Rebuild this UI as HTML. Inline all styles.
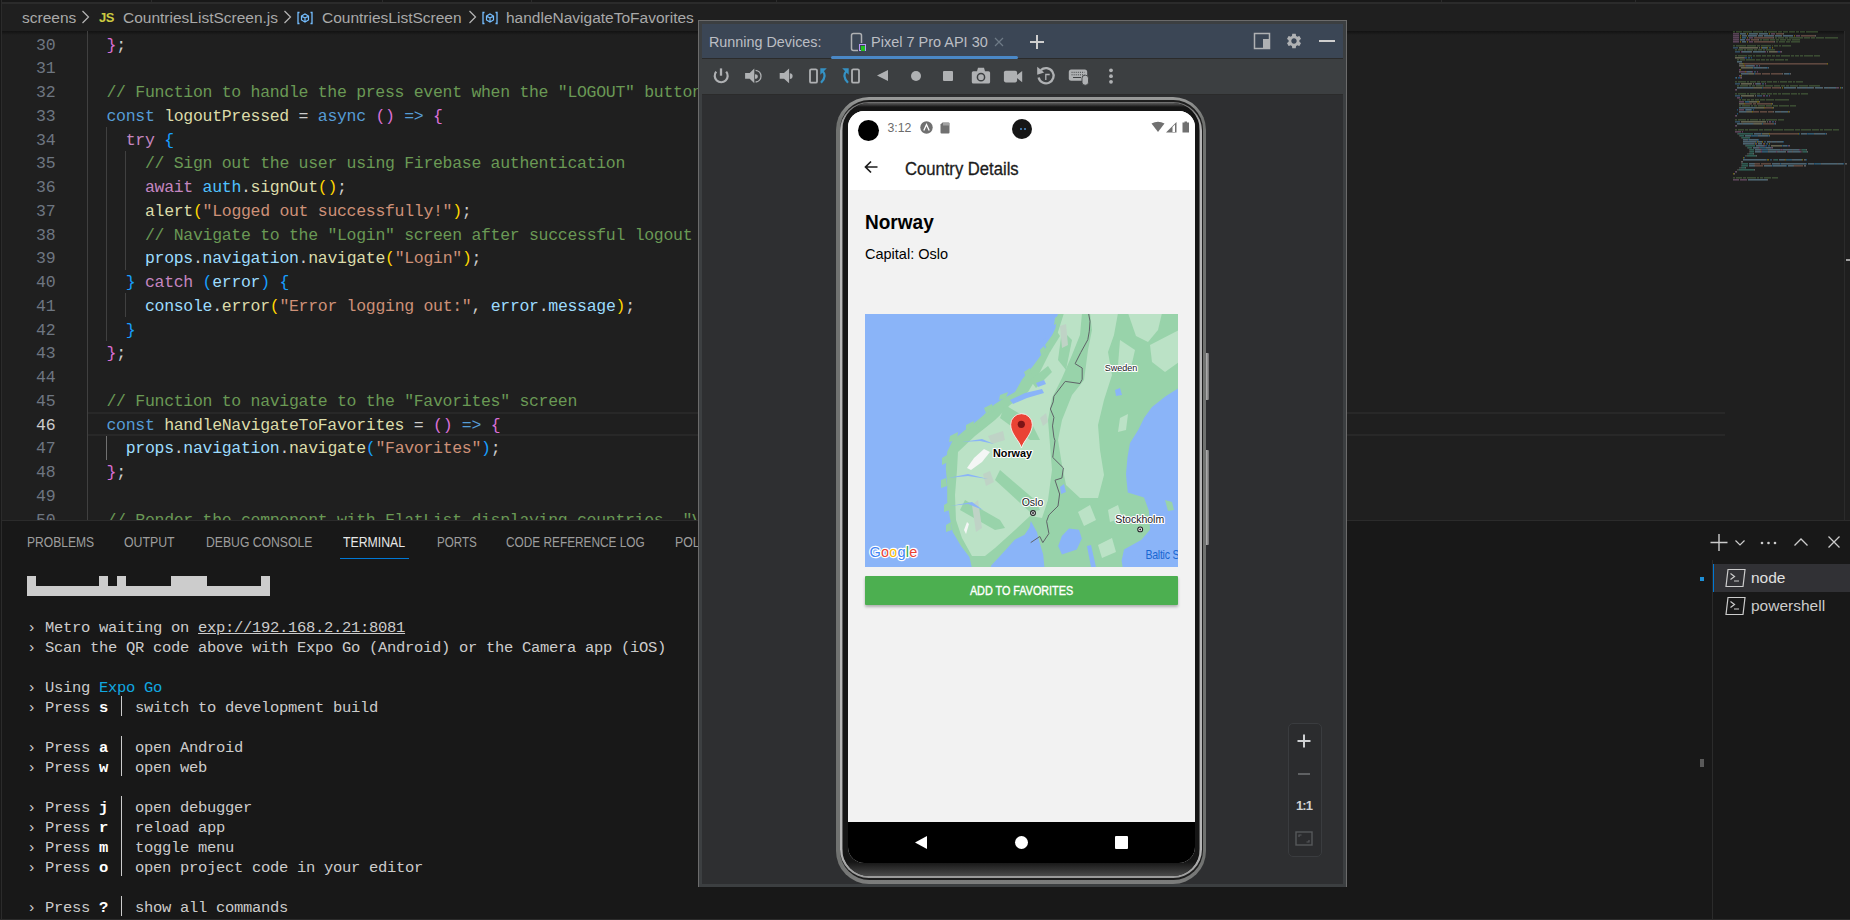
<!DOCTYPE html>
<html><head><meta charset="utf-8">
<style>
*{margin:0;padding:0;box-sizing:border-box}
html,body{width:1850px;height:920px;overflow:hidden;background:#1f1f1f;font-family:"Liberation Sans",sans-serif}
.a{position:absolute}
.cl{position:absolute;left:87.3px;height:23.75px;line-height:23.75px;font-family:"Liberation Mono",monospace;font-size:16.5px;letter-spacing:-0.3px;white-space:pre;padding-top:1.5px}
.ln{position:absolute;left:0;width:55.3px;text-align:right;height:23.75px;line-height:23.75px;font-family:"Liberation Mono",monospace;font-size:16.5px;letter-spacing:-0.3px;white-space:pre;padding-top:1.5px}
.ig{position:absolute;width:1px;background:#404040}
.tl{position:absolute;left:27px;height:20px;line-height:20px;padding-top:1.5px;font-family:"Liberation Mono",monospace;font-size:15.5px;letter-spacing:-0.3px;white-space:pre;color:#cccccc}

.ic{position:absolute}

</style></head><body>
<div class="a" style="left:0;top:0;width:1850px;height:3px;background:#181818"></div>
<div class="a" style="left:0;top:2px;width:1850px;height:2px;background:#2b2b2b"></div>
<div class="a" style="left:151px;top:0;width:1px;height:3px;background:#2b2b2b"></div>
<div class="a" style="left:382px;top:0;width:1px;height:3px;background:#2b2b2b"></div>
<div class="a" style="left:531px;top:0;width:1px;height:3px;background:#2b2b2b"></div>
<div class="a" style="left:776px;top:0;width:1px;height:3px;background:#2b2b2b"></div>
<div class="a" style="left:1441px;top:0;width:1px;height:3px;background:#2b2b2b"></div>
<div class="a" style="left:1635px;top:0;width:1px;height:3px;background:#2b2b2b"></div>
<div class="a" style="left:0;top:0;width:1px;height:920px;background:#181818"></div>
<div class="a" style="left:1px;top:0;width:1px;height:920px;background:#2b2b2b"></div>
<div class="a" style="left:22px;top:8px;height:20px;line-height:20px;font-size:15.5px;color:#a9a9a9;white-space:pre">screens</div>
<svg class="a" style="left:81px;top:10px" width="10" height="14"><path d="M1.5 1 L7.5 7 L1.5 13" stroke="#b4b4b4" stroke-width="1.25" fill="none"/></svg>
<div class="a" style="left:99px;top:9px;height:18px;line-height:18px;font-size:13px;font-weight:bold;color:#cbcb41;letter-spacing:-0.5px">JS</div>
<div class="a" style="left:123px;top:8px;height:20px;line-height:20px;font-size:15.5px;color:#a9a9a9;white-space:pre">CountriesListScreen.js</div>
<svg class="a" style="left:283px;top:10px" width="10" height="14"><path d="M1.5 1 L7.5 7 L1.5 13" stroke="#b4b4b4" stroke-width="1.25" fill="none"/></svg>
<svg class="a" style="left:297px;top:11px" width="16" height="14"><path d="M2.5 1.5 H1 V12.5 H2.5 M13.5 1.5 H15 V12.5 H13.5" stroke="#75beff" stroke-width="1.3" fill="none"/><path d="M4.5 5 L8 3 L11.5 5 V9 L8 11 L4.5 9 Z M4.5 5 L8 7 L11.5 5 M8 7 V11" stroke="#75beff" stroke-width="1.2" fill="none"/></svg>
<div class="a" style="left:322px;top:8px;height:20px;line-height:20px;font-size:15.5px;color:#a9a9a9;white-space:pre">CountriesListScreen</div>
<svg class="a" style="left:468px;top:10px" width="10" height="14"><path d="M1.5 1 L7.5 7 L1.5 13" stroke="#b4b4b4" stroke-width="1.25" fill="none"/></svg>
<svg class="a" style="left:482px;top:11px" width="16" height="14"><path d="M2.5 1.5 H1 V12.5 H2.5 M13.5 1.5 H15 V12.5 H13.5" stroke="#75beff" stroke-width="1.3" fill="none"/><path d="M4.5 5 L8 3 L11.5 5 V9 L8 11 L4.5 9 Z M4.5 5 L8 7 L11.5 5 M8 7 V11" stroke="#75beff" stroke-width="1.2" fill="none"/></svg>
<div class="a" style="left:506px;top:8px;height:20px;line-height:20px;font-size:15.5px;color:#a9a9a9;white-space:pre">handleNavigateToFavorites</div>
<div class="a" style="left:2px;top:31px;width:1843px;height:4px;background:linear-gradient(#121212,rgba(31,31,31,0))"></div>
<div class="a" style="left:88px;top:412px;width:1637px;height:2px;background:#282828"></div>
<div class="a" style="left:88px;top:434px;width:1637px;height:2px;background:#282828"></div>
<div class="ig" style="left:87px;top:31px;height:490px"></div>
<div class="ig" style="left:106px;top:127.0px;height:213.8px;background:#404040"></div>
<div class="ig" style="left:125px;top:150.8px;height:118.8px;background:#404040"></div>
<div class="ig" style="left:125px;top:293.2px;height:23.8px;background:#404040"></div>
<div class="ig" style="left:106px;top:435.8px;height:23.8px;background:#707070"></div>
<div class="cl" style="top:32.00px"><span style="color:#cccccc"> </span><span style="color:#cccccc"> </span><span style="color:#da70d6">}</span><span style="color:#cccccc">;</span></div>
<div class="ln" style="top:32.00px;color:#6e7681">30</div>
<div class="cl" style="top:55.75px"></div>
<div class="ln" style="top:55.75px;color:#6e7681">31</div>
<div class="cl" style="top:79.50px"><span style="color:#cccccc"> </span><span style="color:#cccccc"> </span><span style="color:#6a9955">// Function to handle the press event when the "LOGOUT" button is pressed</span></div>
<div class="ln" style="top:79.50px;color:#6e7681">32</div>
<div class="cl" style="top:103.25px"><span style="color:#cccccc"> </span><span style="color:#cccccc"> </span><span style="color:#569cd6">const</span><span style="color:#cccccc"> </span><span style="color:#dcdcaa">logoutPressed</span><span style="color:#cccccc"> </span><span style="color:#cccccc">=</span><span style="color:#cccccc"> </span><span style="color:#569cd6">async</span><span style="color:#cccccc"> </span><span style="color:#da70d6">(</span><span style="color:#da70d6">)</span><span style="color:#cccccc"> </span><span style="color:#569cd6">=&gt;</span><span style="color:#cccccc"> </span><span style="color:#da70d6">{</span></div>
<div class="ln" style="top:103.25px;color:#6e7681">33</div>
<div class="cl" style="top:127.00px"><span style="color:#cccccc"> </span><span style="color:#cccccc"> </span><span style="color:#cccccc"> </span><span style="color:#cccccc"> </span><span style="color:#c586c0">try</span><span style="color:#cccccc"> </span><span style="color:#179fff">{</span></div>
<div class="ln" style="top:127.00px;color:#6e7681">34</div>
<div class="cl" style="top:150.75px"><span style="color:#cccccc"> </span><span style="color:#cccccc"> </span><span style="color:#cccccc"> </span><span style="color:#cccccc"> </span><span style="color:#cccccc"> </span><span style="color:#cccccc"> </span><span style="color:#6a9955">// Sign out the user using Firebase authentication</span></div>
<div class="ln" style="top:150.75px;color:#6e7681">35</div>
<div class="cl" style="top:174.50px"><span style="color:#cccccc"> </span><span style="color:#cccccc"> </span><span style="color:#cccccc"> </span><span style="color:#cccccc"> </span><span style="color:#cccccc"> </span><span style="color:#cccccc"> </span><span style="color:#c586c0">await</span><span style="color:#cccccc"> </span><span style="color:#4fc1ff">auth</span><span style="color:#cccccc">.</span><span style="color:#dcdcaa">signOut</span><span style="color:#ffd700">(</span><span style="color:#ffd700">)</span><span style="color:#cccccc">;</span></div>
<div class="ln" style="top:174.50px;color:#6e7681">36</div>
<div class="cl" style="top:198.25px"><span style="color:#cccccc"> </span><span style="color:#cccccc"> </span><span style="color:#cccccc"> </span><span style="color:#cccccc"> </span><span style="color:#cccccc"> </span><span style="color:#cccccc"> </span><span style="color:#dcdcaa">alert</span><span style="color:#ffd700">(</span><span style="color:#ce9178">"Logged out successfully!"</span><span style="color:#ffd700">)</span><span style="color:#cccccc">;</span></div>
<div class="ln" style="top:198.25px;color:#6e7681">37</div>
<div class="cl" style="top:222.00px"><span style="color:#cccccc"> </span><span style="color:#cccccc"> </span><span style="color:#cccccc"> </span><span style="color:#cccccc"> </span><span style="color:#cccccc"> </span><span style="color:#cccccc"> </span><span style="color:#6a9955">// Navigate to the "Login" screen after successful logout</span></div>
<div class="ln" style="top:222.00px;color:#6e7681">38</div>
<div class="cl" style="top:245.75px"><span style="color:#cccccc"> </span><span style="color:#cccccc"> </span><span style="color:#cccccc"> </span><span style="color:#cccccc"> </span><span style="color:#cccccc"> </span><span style="color:#cccccc"> </span><span style="color:#9cdcfe">props</span><span style="color:#cccccc">.</span><span style="color:#9cdcfe">navigation</span><span style="color:#cccccc">.</span><span style="color:#dcdcaa">navigate</span><span style="color:#ffd700">(</span><span style="color:#ce9178">"Login"</span><span style="color:#ffd700">)</span><span style="color:#cccccc">;</span></div>
<div class="ln" style="top:245.75px;color:#6e7681">39</div>
<div class="cl" style="top:269.50px"><span style="color:#cccccc"> </span><span style="color:#cccccc"> </span><span style="color:#cccccc"> </span><span style="color:#cccccc"> </span><span style="color:#179fff">}</span><span style="color:#cccccc"> </span><span style="color:#c586c0">catch</span><span style="color:#cccccc"> </span><span style="color:#179fff">(</span><span style="color:#9cdcfe">error</span><span style="color:#179fff">)</span><span style="color:#cccccc"> </span><span style="color:#179fff">{</span></div>
<div class="ln" style="top:269.50px;color:#6e7681">40</div>
<div class="cl" style="top:293.25px"><span style="color:#cccccc"> </span><span style="color:#cccccc"> </span><span style="color:#cccccc"> </span><span style="color:#cccccc"> </span><span style="color:#cccccc"> </span><span style="color:#cccccc"> </span><span style="color:#9cdcfe">console</span><span style="color:#cccccc">.</span><span style="color:#dcdcaa">error</span><span style="color:#ffd700">(</span><span style="color:#ce9178">"Error logging out:"</span><span style="color:#cccccc">,</span><span style="color:#cccccc"> </span><span style="color:#9cdcfe">error</span><span style="color:#cccccc">.</span><span style="color:#9cdcfe">message</span><span style="color:#ffd700">)</span><span style="color:#cccccc">;</span></div>
<div class="ln" style="top:293.25px;color:#6e7681">41</div>
<div class="cl" style="top:317.00px"><span style="color:#cccccc"> </span><span style="color:#cccccc"> </span><span style="color:#cccccc"> </span><span style="color:#cccccc"> </span><span style="color:#179fff">}</span></div>
<div class="ln" style="top:317.00px;color:#6e7681">42</div>
<div class="cl" style="top:340.75px"><span style="color:#cccccc"> </span><span style="color:#cccccc"> </span><span style="color:#da70d6">}</span><span style="color:#cccccc">;</span></div>
<div class="ln" style="top:340.75px;color:#6e7681">43</div>
<div class="cl" style="top:364.50px"></div>
<div class="ln" style="top:364.50px;color:#6e7681">44</div>
<div class="cl" style="top:388.25px"><span style="color:#cccccc"> </span><span style="color:#cccccc"> </span><span style="color:#6a9955">// Function to navigate to the "Favorites" screen</span></div>
<div class="ln" style="top:388.25px;color:#6e7681">45</div>
<div class="cl" style="top:412.00px"><span style="color:#cccccc"> </span><span style="color:#cccccc"> </span><span style="color:#569cd6">const</span><span style="color:#cccccc"> </span><span style="color:#dcdcaa">handleNavigateToFavorites</span><span style="color:#cccccc"> </span><span style="color:#cccccc">=</span><span style="color:#cccccc"> </span><span style="color:#da70d6">(</span><span style="color:#da70d6">)</span><span style="color:#cccccc"> </span><span style="color:#569cd6">=&gt;</span><span style="color:#cccccc"> </span><span style="color:#da70d6">{</span></div>
<div class="ln" style="top:412.00px;color:#cccccc">46</div>
<div class="cl" style="top:435.75px"><span style="color:#cccccc"> </span><span style="color:#cccccc"> </span><span style="color:#cccccc"> </span><span style="color:#cccccc"> </span><span style="color:#9cdcfe">props</span><span style="color:#cccccc">.</span><span style="color:#9cdcfe">navigation</span><span style="color:#cccccc">.</span><span style="color:#dcdcaa">navigate</span><span style="color:#179fff">(</span><span style="color:#ce9178">"Favorites"</span><span style="color:#179fff">)</span><span style="color:#cccccc">;</span></div>
<div class="ln" style="top:435.75px;color:#6e7681">47</div>
<div class="cl" style="top:459.50px"><span style="color:#cccccc"> </span><span style="color:#cccccc"> </span><span style="color:#da70d6">}</span><span style="color:#cccccc">;</span></div>
<div class="ln" style="top:459.50px;color:#6e7681">48</div>
<div class="cl" style="top:483.25px"></div>
<div class="ln" style="top:483.25px;color:#6e7681">49</div>
<div class="cl" style="top:507.00px"><span style="color:#cccccc"> </span><span style="color:#cccccc"> </span><span style="color:#6a9955">// Render the component with FlatList displaying countries, "View Favorites" button, and "LOGOUT" button</span></div>
<div class="ln" style="top:507.00px;color:#6e7681">50</div>
<svg style="position:absolute;left:0;top:0" width="1850" height="920" opacity="0.36"><rect x="1733" y="31" width="2" height="1.6" fill="#6a9955"/><rect x="1736" y="31" width="6" height="1.6" fill="#6a9955"/><rect x="1743" y="31" width="9" height="1.6" fill="#6a9955"/><rect x="1753" y="31" width="10" height="1.6" fill="#6a9955"/><rect x="1764" y="31" width="3" height="1.6" fill="#6a9955"/><rect x="1768" y="31" width="9" height="1.6" fill="#6a9955"/><rect x="1778" y="31" width="4" height="1.6" fill="#6a9955"/><rect x="1783" y="31" width="5" height="1.6" fill="#6a9955"/><rect x="1789" y="31" width="6" height="1.6" fill="#6a9955"/><rect x="1796" y="31" width="3" height="1.6" fill="#6a9955"/><rect x="1800" y="31" width="5" height="1.6" fill="#6a9955"/><rect x="1806" y="31" width="12" height="1.6" fill="#6a9955"/><rect x="1733" y="33" width="6" height="1.6" fill="#c586c0"/><rect x="1740" y="33" width="5" height="1.6" fill="#9cdcfe"/><rect x="1745" y="33" width="1" height="1.6" fill="#cccccc"/><rect x="1747" y="33" width="1" height="1.6" fill="#ffd700"/><rect x="1749" y="33" width="8" height="1.6" fill="#9cdcfe"/><rect x="1757" y="33" width="1" height="1.6" fill="#cccccc"/><rect x="1759" y="33" width="9" height="1.6" fill="#9cdcfe"/><rect x="1769" y="33" width="1" height="1.6" fill="#ffd700"/><rect x="1771" y="33" width="4" height="1.6" fill="#c586c0"/><rect x="1776" y="33" width="7" height="1.6" fill="#ce9178"/><rect x="1783" y="33" width="1" height="1.6" fill="#cccccc"/><rect x="1733" y="35" width="6" height="1.6" fill="#c586c0"/><rect x="1740" y="35" width="1" height="1.6" fill="#ffd700"/><rect x="1742" y="35" width="4" height="1.6" fill="#9cdcfe"/><rect x="1746" y="35" width="1" height="1.6" fill="#cccccc"/><rect x="1748" y="35" width="8" height="1.6" fill="#9cdcfe"/><rect x="1756" y="35" width="1" height="1.6" fill="#cccccc"/><rect x="1758" y="35" width="4" height="1.6" fill="#9cdcfe"/><rect x="1762" y="35" width="1" height="1.6" fill="#cccccc"/><rect x="1764" y="35" width="9" height="1.6" fill="#9cdcfe"/><rect x="1773" y="35" width="1" height="1.6" fill="#cccccc"/><rect x="1775" y="35" width="6" height="1.6" fill="#9cdcfe"/><rect x="1781" y="35" width="1" height="1.6" fill="#cccccc"/><rect x="1783" y="35" width="10" height="1.6" fill="#9cdcfe"/><rect x="1794" y="35" width="1" height="1.6" fill="#ffd700"/><rect x="1796" y="35" width="4" height="1.6" fill="#c586c0"/><rect x="1801" y="35" width="14" height="1.6" fill="#ce9178"/><rect x="1815" y="35" width="1" height="1.6" fill="#cccccc"/><rect x="1733" y="37" width="6" height="1.6" fill="#c586c0"/><rect x="1740" y="37" width="1" height="1.6" fill="#ffd700"/><rect x="1742" y="37" width="4" height="1.6" fill="#4fc1ff"/><rect x="1747" y="37" width="1" height="1.6" fill="#ffd700"/><rect x="1749" y="37" width="4" height="1.6" fill="#c586c0"/><rect x="1754" y="37" width="19" height="1.6" fill="#ce9178"/><rect x="1773" y="37" width="1" height="1.6" fill="#cccccc"/><rect x="1775" y="37" width="2" height="1.6" fill="#6a9955"/><rect x="1778" y="37" width="6" height="1.6" fill="#6a9955"/><rect x="1785" y="37" width="3" height="1.6" fill="#6a9955"/><rect x="1789" y="37" width="14" height="1.6" fill="#6a9955"/><rect x="1804" y="37" width="6" height="1.6" fill="#6a9955"/><rect x="1811" y="37" width="4" height="1.6" fill="#6a9955"/><rect x="1816" y="37" width="8" height="1.6" fill="#6a9955"/><rect x="1825" y="37" width="13" height="1.6" fill="#6a9955"/><rect x="1733" y="39" width="6" height="1.6" fill="#c586c0"/><rect x="1740" y="39" width="5" height="1.6" fill="#9cdcfe"/><rect x="1746" y="39" width="4" height="1.6" fill="#c586c0"/><rect x="1751" y="39" width="7" height="1.6" fill="#ce9178"/><rect x="1758" y="39" width="1" height="1.6" fill="#cccccc"/><rect x="1760" y="39" width="2" height="1.6" fill="#6a9955"/><rect x="1763" y="39" width="6" height="1.6" fill="#6a9955"/><rect x="1770" y="39" width="5" height="1.6" fill="#6a9955"/><rect x="1776" y="39" width="3" height="1.6" fill="#6a9955"/><rect x="1780" y="39" width="6" height="1.6" fill="#6a9955"/><rect x="1787" y="39" width="4" height="1.6" fill="#6a9955"/><rect x="1792" y="39" width="8" height="1.6" fill="#6a9955"/><rect x="1733" y="41" width="6" height="1.6" fill="#c586c0"/><rect x="1740" y="41" width="1" height="1.6" fill="#ffd700"/><rect x="1742" y="41" width="4" height="1.6" fill="#9cdcfe"/><rect x="1747" y="41" width="1" height="1.6" fill="#ffd700"/><rect x="1749" y="41" width="4" height="1.6" fill="#c586c0"/><rect x="1754" y="41" width="20" height="1.6" fill="#ce9178"/><rect x="1774" y="41" width="1" height="1.6" fill="#cccccc"/><rect x="1776" y="41" width="2" height="1.6" fill="#6a9955"/><rect x="1779" y="41" width="6" height="1.6" fill="#6a9955"/><rect x="1786" y="41" width="4" height="1.6" fill="#6a9955"/><rect x="1791" y="41" width="9" height="1.6" fill="#6a9955"/><rect x="1733" y="45" width="2" height="1.6" fill="#6a9955"/><rect x="1736" y="45" width="10" height="1.6" fill="#6a9955"/><rect x="1747" y="45" width="9" height="1.6" fill="#6a9955"/><rect x="1757" y="45" width="3" height="1.6" fill="#6a9955"/><rect x="1761" y="45" width="10" height="1.6" fill="#6a9955"/><rect x="1772" y="45" width="1" height="1.6" fill="#6a9955"/><rect x="1774" y="45" width="4" height="1.6" fill="#6a9955"/><rect x="1779" y="45" width="2" height="1.6" fill="#6a9955"/><rect x="1782" y="45" width="9" height="1.6" fill="#6a9955"/><rect x="1733" y="47" width="5" height="1.6" fill="#569cd6"/><rect x="1739" y="47" width="19" height="1.6" fill="#dcdcaa"/><rect x="1759" y="47" width="1" height="1.6" fill="#cccccc"/><rect x="1761" y="47" width="1" height="1.6" fill="#ffd700"/><rect x="1762" y="47" width="5" height="1.6" fill="#9cdcfe"/><rect x="1767" y="47" width="1" height="1.6" fill="#ffd700"/><rect x="1769" y="47" width="2" height="1.6" fill="#569cd6"/><rect x="1772" y="47" width="1" height="1.6" fill="#ffd700"/><rect x="1735" y="49" width="2" height="1.6" fill="#6a9955"/><rect x="1738" y="49" width="5" height="1.6" fill="#6a9955"/><rect x="1744" y="49" width="2" height="1.6" fill="#6a9955"/><rect x="1747" y="49" width="6" height="1.6" fill="#6a9955"/><rect x="1754" y="49" width="3" height="1.6" fill="#6a9955"/><rect x="1758" y="49" width="4" height="1.6" fill="#6a9955"/><rect x="1763" y="49" width="2" height="1.6" fill="#6a9955"/><rect x="1766" y="49" width="9" height="1.6" fill="#6a9955"/><rect x="1735" y="51" width="5" height="1.6" fill="#569cd6"/><rect x="1741" y="51" width="1" height="1.6" fill="#da70d6"/><rect x="1742" y="51" width="9" height="1.6" fill="#9cdcfe"/><rect x="1751" y="51" width="1" height="1.6" fill="#cccccc"/><rect x="1753" y="51" width="12" height="1.6" fill="#9cdcfe"/><rect x="1765" y="51" width="1" height="1.6" fill="#da70d6"/><rect x="1767" y="51" width="1" height="1.6" fill="#cccccc"/><rect x="1769" y="51" width="8" height="1.6" fill="#dcdcaa"/><rect x="1777" y="51" width="1" height="1.6" fill="#da70d6"/><rect x="1778" y="51" width="1" height="1.6" fill="#179fff"/><rect x="1779" y="51" width="1" height="1.6" fill="#179fff"/><rect x="1780" y="51" width="1" height="1.6" fill="#da70d6"/><rect x="1781" y="51" width="1" height="1.6" fill="#cccccc"/><rect x="1735" y="55" width="2" height="1.6" fill="#6a9955"/><rect x="1738" y="55" width="9" height="1.6" fill="#6a9955"/><rect x="1748" y="55" width="4" height="1.6" fill="#6a9955"/><rect x="1753" y="55" width="2" height="1.6" fill="#6a9955"/><rect x="1756" y="55" width="5" height="1.6" fill="#6a9955"/><rect x="1762" y="55" width="4" height="1.6" fill="#6a9955"/><rect x="1767" y="55" width="4" height="1.6" fill="#6a9955"/><rect x="1772" y="55" width="3" height="1.6" fill="#6a9955"/><rect x="1776" y="55" width="4" height="1.6" fill="#6a9955"/><rect x="1781" y="55" width="9" height="1.6" fill="#6a9955"/><rect x="1791" y="55" width="3" height="1.6" fill="#6a9955"/><rect x="1795" y="55" width="4" height="1.6" fill="#6a9955"/><rect x="1800" y="55" width="3" height="1.6" fill="#6a9955"/><rect x="1804" y="55" width="9" height="1.6" fill="#6a9955"/><rect x="1814" y="55" width="6" height="1.6" fill="#6a9955"/><rect x="1735" y="57" width="9" height="1.6" fill="#dcdcaa"/><rect x="1744" y="57" width="1" height="1.6" fill="#da70d6"/><rect x="1745" y="57" width="1" height="1.6" fill="#179fff"/><rect x="1746" y="57" width="1" height="1.6" fill="#179fff"/><rect x="1748" y="57" width="2" height="1.6" fill="#569cd6"/><rect x="1751" y="57" width="1" height="1.6" fill="#179fff"/><rect x="1737" y="59" width="2" height="1.6" fill="#6a9955"/><rect x="1740" y="59" width="5" height="1.6" fill="#6a9955"/><rect x="1746" y="59" width="9" height="1.6" fill="#6a9955"/><rect x="1756" y="59" width="4" height="1.6" fill="#6a9955"/><rect x="1761" y="59" width="4" height="1.6" fill="#6a9955"/><rect x="1766" y="59" width="3" height="1.6" fill="#6a9955"/><rect x="1770" y="59" width="4" height="1.6" fill="#6a9955"/><rect x="1775" y="59" width="9" height="1.6" fill="#6a9955"/><rect x="1785" y="59" width="3" height="1.6" fill="#6a9955"/><rect x="1737" y="61" width="5" height="1.6" fill="#9cdcfe"/><rect x="1739" y="63" width="1" height="1.6" fill="#cccccc"/><rect x="1740" y="63" width="3" height="1.6" fill="#dcdcaa"/><rect x="1743" y="63" width="1" height="1.6" fill="#ffd700"/><rect x="1744" y="63" width="83" height="1.6" fill="#ce9178"/><rect x="1827" y="63" width="1" height="1.6" fill="#ffd700"/><rect x="1739" y="65" width="1" height="1.6" fill="#cccccc"/><rect x="1740" y="65" width="4" height="1.6" fill="#dcdcaa"/><rect x="1744" y="65" width="1" height="1.6" fill="#ffd700"/><rect x="1745" y="65" width="1" height="1.6" fill="#da70d6"/><rect x="1746" y="65" width="8" height="1.6" fill="#9cdcfe"/><rect x="1754" y="65" width="1" height="1.6" fill="#da70d6"/><rect x="1756" y="65" width="2" height="1.6" fill="#569cd6"/><rect x="1759" y="65" width="1" height="1.6" fill="#da70d6"/><rect x="1741" y="67" width="12" height="1.6" fill="#dcdcaa"/><rect x="1753" y="67" width="1" height="1.6" fill="#179fff"/><rect x="1754" y="67" width="8" height="1.6" fill="#9cdcfe"/><rect x="1762" y="67" width="1" height="1.6" fill="#cccccc"/><rect x="1763" y="67" width="4" height="1.6" fill="#9cdcfe"/><rect x="1767" y="67" width="1" height="1.6" fill="#179fff"/><rect x="1768" y="67" width="1" height="1.6" fill="#cccccc"/><rect x="1739" y="69" width="1" height="1.6" fill="#da70d6"/><rect x="1740" y="69" width="1" height="1.6" fill="#ffd700"/><rect x="1739" y="71" width="1" height="1.6" fill="#cccccc"/><rect x="1740" y="71" width="5" height="1.6" fill="#c586c0"/><rect x="1745" y="71" width="1" height="1.6" fill="#ffd700"/><rect x="1746" y="71" width="1" height="1.6" fill="#da70d6"/><rect x="1747" y="71" width="5" height="1.6" fill="#9cdcfe"/><rect x="1752" y="71" width="1" height="1.6" fill="#da70d6"/><rect x="1754" y="71" width="2" height="1.6" fill="#569cd6"/><rect x="1757" y="71" width="1" height="1.6" fill="#da70d6"/><rect x="1741" y="73" width="7" height="1.6" fill="#9cdcfe"/><rect x="1748" y="73" width="1" height="1.6" fill="#cccccc"/><rect x="1749" y="73" width="5" height="1.6" fill="#dcdcaa"/><rect x="1754" y="73" width="1" height="1.6" fill="#179fff"/><rect x="1755" y="73" width="6" height="1.6" fill="#ce9178"/><rect x="1762" y="73" width="8" height="1.6" fill="#ce9178"/><rect x="1771" y="73" width="11" height="1.6" fill="#ce9178"/><rect x="1782" y="73" width="1" height="1.6" fill="#cccccc"/><rect x="1784" y="73" width="5" height="1.6" fill="#9cdcfe"/><rect x="1789" y="73" width="1" height="1.6" fill="#179fff"/><rect x="1790" y="73" width="1" height="1.6" fill="#cccccc"/><rect x="1739" y="75" width="1" height="1.6" fill="#da70d6"/><rect x="1740" y="75" width="1" height="1.6" fill="#ffd700"/><rect x="1741" y="75" width="1" height="1.6" fill="#cccccc"/><rect x="1735" y="77" width="1" height="1.6" fill="#179fff"/><rect x="1736" y="77" width="1" height="1.6" fill="#cccccc"/><rect x="1738" y="77" width="1" height="1.6" fill="#179fff"/><rect x="1739" y="77" width="1" height="1.6" fill="#179fff"/><rect x="1740" y="77" width="1" height="1.6" fill="#da70d6"/><rect x="1741" y="77" width="1" height="1.6" fill="#cccccc"/><rect x="1735" y="81" width="2" height="1.6" fill="#6a9955"/><rect x="1738" y="81" width="8" height="1.6" fill="#6a9955"/><rect x="1747" y="81" width="2" height="1.6" fill="#6a9955"/><rect x="1750" y="81" width="6" height="1.6" fill="#6a9955"/><rect x="1757" y="81" width="3" height="1.6" fill="#6a9955"/><rect x="1761" y="81" width="5" height="1.6" fill="#6a9955"/><rect x="1767" y="81" width="5" height="1.6" fill="#6a9955"/><rect x="1773" y="81" width="4" height="1.6" fill="#6a9955"/><rect x="1778" y="81" width="1" height="1.6" fill="#6a9955"/><rect x="1780" y="81" width="7" height="1.6" fill="#6a9955"/><rect x="1788" y="81" width="4" height="1.6" fill="#6a9955"/><rect x="1793" y="81" width="2" height="1.6" fill="#6a9955"/><rect x="1796" y="81" width="7" height="1.6" fill="#6a9955"/><rect x="1735" y="83" width="5" height="1.6" fill="#569cd6"/><rect x="1741" y="83" width="11" height="1.6" fill="#dcdcaa"/><rect x="1753" y="83" width="1" height="1.6" fill="#cccccc"/><rect x="1755" y="83" width="1" height="1.6" fill="#da70d6"/><rect x="1756" y="83" width="4" height="1.6" fill="#9cdcfe"/><rect x="1760" y="83" width="1" height="1.6" fill="#da70d6"/><rect x="1762" y="83" width="2" height="1.6" fill="#569cd6"/><rect x="1765" y="83" width="1" height="1.6" fill="#da70d6"/><rect x="1737" y="85" width="2" height="1.6" fill="#6a9955"/><rect x="1740" y="85" width="8" height="1.6" fill="#6a9955"/><rect x="1749" y="85" width="2" height="1.6" fill="#6a9955"/><rect x="1752" y="85" width="3" height="1.6" fill="#6a9955"/><rect x="1756" y="85" width="8" height="1.6" fill="#6a9955"/><rect x="1765" y="85" width="8" height="1.6" fill="#6a9955"/><rect x="1774" y="85" width="6" height="1.6" fill="#6a9955"/><rect x="1781" y="85" width="4" height="1.6" fill="#6a9955"/><rect x="1786" y="85" width="3" height="1.6" fill="#6a9955"/><rect x="1790" y="85" width="8" height="1.6" fill="#6a9955"/><rect x="1799" y="85" width="9" height="1.6" fill="#6a9955"/><rect x="1809" y="85" width="11" height="1.6" fill="#6a9955"/><rect x="1737" y="87" width="5" height="1.6" fill="#9cdcfe"/><rect x="1742" y="87" width="1" height="1.6" fill="#cccccc"/><rect x="1743" y="87" width="10" height="1.6" fill="#9cdcfe"/><rect x="1753" y="87" width="1" height="1.6" fill="#cccccc"/><rect x="1754" y="87" width="8" height="1.6" fill="#dcdcaa"/><rect x="1762" y="87" width="1" height="1.6" fill="#179fff"/><rect x="1763" y="87" width="8" height="1.6" fill="#ce9178"/><rect x="1772" y="87" width="8" height="1.6" fill="#ce9178"/><rect x="1780" y="87" width="1" height="1.6" fill="#cccccc"/><rect x="1782" y="87" width="1" height="1.6" fill="#ffd700"/><rect x="1784" y="87" width="11" height="1.6" fill="#9cdcfe"/><rect x="1795" y="87" width="1" height="1.6" fill="#cccccc"/><rect x="1797" y="87" width="4" height="1.6" fill="#9cdcfe"/><rect x="1801" y="87" width="1" height="1.6" fill="#cccccc"/><rect x="1802" y="87" width="4" height="1.6" fill="#9cdcfe"/><rect x="1806" y="87" width="1" height="1.6" fill="#cccccc"/><rect x="1807" y="87" width="6" height="1.6" fill="#9cdcfe"/><rect x="1813" y="87" width="1" height="1.6" fill="#cccccc"/><rect x="1815" y="87" width="7" height="1.6" fill="#9cdcfe"/><rect x="1822" y="87" width="1" height="1.6" fill="#cccccc"/><rect x="1824" y="87" width="4" height="1.6" fill="#9cdcfe"/><rect x="1828" y="87" width="1" height="1.6" fill="#cccccc"/><rect x="1829" y="87" width="7" height="1.6" fill="#9cdcfe"/><rect x="1836" y="87" width="1" height="1.6" fill="#da70d6"/><rect x="1837" y="87" width="1" height="1.6" fill="#b5cea8"/><rect x="1838" y="87" width="1" height="1.6" fill="#da70d6"/><rect x="1840" y="87" width="1" height="1.6" fill="#ffd700"/><rect x="1841" y="87" width="1" height="1.6" fill="#179fff"/><rect x="1842" y="87" width="1" height="1.6" fill="#cccccc"/><rect x="1735" y="89" width="1" height="1.6" fill="#da70d6"/><rect x="1736" y="89" width="1" height="1.6" fill="#cccccc"/><rect x="1735" y="93" width="2" height="1.6" fill="#6a9955"/><rect x="1738" y="93" width="8" height="1.6" fill="#6a9955"/><rect x="1747" y="93" width="2" height="1.6" fill="#6a9955"/><rect x="1750" y="93" width="6" height="1.6" fill="#6a9955"/><rect x="1757" y="93" width="3" height="1.6" fill="#6a9955"/><rect x="1761" y="93" width="5" height="1.6" fill="#6a9955"/><rect x="1767" y="93" width="5" height="1.6" fill="#6a9955"/><rect x="1773" y="93" width="4" height="1.6" fill="#6a9955"/><rect x="1778" y="93" width="3" height="1.6" fill="#6a9955"/><rect x="1782" y="93" width="8" height="1.6" fill="#6a9955"/><rect x="1791" y="93" width="6" height="1.6" fill="#6a9955"/><rect x="1798" y="93" width="2" height="1.6" fill="#6a9955"/><rect x="1801" y="93" width="7" height="1.6" fill="#6a9955"/><rect x="1735" y="95" width="5" height="1.6" fill="#569cd6"/><rect x="1741" y="95" width="13" height="1.6" fill="#dcdcaa"/><rect x="1755" y="95" width="1" height="1.6" fill="#cccccc"/><rect x="1757" y="95" width="5" height="1.6" fill="#569cd6"/><rect x="1763" y="95" width="1" height="1.6" fill="#da70d6"/><rect x="1764" y="95" width="1" height="1.6" fill="#da70d6"/><rect x="1766" y="95" width="2" height="1.6" fill="#569cd6"/><rect x="1769" y="95" width="1" height="1.6" fill="#da70d6"/><rect x="1737" y="97" width="3" height="1.6" fill="#c586c0"/><rect x="1741" y="97" width="1" height="1.6" fill="#179fff"/><rect x="1739" y="99" width="2" height="1.6" fill="#6a9955"/><rect x="1742" y="99" width="4" height="1.6" fill="#6a9955"/><rect x="1747" y="99" width="3" height="1.6" fill="#6a9955"/><rect x="1751" y="99" width="3" height="1.6" fill="#6a9955"/><rect x="1755" y="99" width="4" height="1.6" fill="#6a9955"/><rect x="1760" y="99" width="5" height="1.6" fill="#6a9955"/><rect x="1766" y="99" width="8" height="1.6" fill="#6a9955"/><rect x="1775" y="99" width="14" height="1.6" fill="#6a9955"/><rect x="1739" y="101" width="5" height="1.6" fill="#c586c0"/><rect x="1745" y="101" width="4" height="1.6" fill="#4fc1ff"/><rect x="1749" y="101" width="1" height="1.6" fill="#cccccc"/><rect x="1750" y="101" width="7" height="1.6" fill="#dcdcaa"/><rect x="1757" y="101" width="1" height="1.6" fill="#ffd700"/><rect x="1758" y="101" width="1" height="1.6" fill="#ffd700"/><rect x="1759" y="101" width="1" height="1.6" fill="#cccccc"/><rect x="1739" y="103" width="5" height="1.6" fill="#dcdcaa"/><rect x="1744" y="103" width="1" height="1.6" fill="#ffd700"/><rect x="1745" y="103" width="7" height="1.6" fill="#ce9178"/><rect x="1753" y="103" width="3" height="1.6" fill="#ce9178"/><rect x="1757" y="103" width="14" height="1.6" fill="#ce9178"/><rect x="1771" y="103" width="1" height="1.6" fill="#ffd700"/><rect x="1772" y="103" width="1" height="1.6" fill="#cccccc"/><rect x="1739" y="105" width="2" height="1.6" fill="#6a9955"/><rect x="1742" y="105" width="8" height="1.6" fill="#6a9955"/><rect x="1751" y="105" width="2" height="1.6" fill="#6a9955"/><rect x="1754" y="105" width="3" height="1.6" fill="#6a9955"/><rect x="1758" y="105" width="7" height="1.6" fill="#6a9955"/><rect x="1766" y="105" width="6" height="1.6" fill="#6a9955"/><rect x="1773" y="105" width="5" height="1.6" fill="#6a9955"/><rect x="1779" y="105" width="10" height="1.6" fill="#6a9955"/><rect x="1790" y="105" width="6" height="1.6" fill="#6a9955"/><rect x="1739" y="107" width="5" height="1.6" fill="#9cdcfe"/><rect x="1744" y="107" width="1" height="1.6" fill="#cccccc"/><rect x="1745" y="107" width="10" height="1.6" fill="#9cdcfe"/><rect x="1755" y="107" width="1" height="1.6" fill="#cccccc"/><rect x="1756" y="107" width="8" height="1.6" fill="#dcdcaa"/><rect x="1764" y="107" width="1" height="1.6" fill="#ffd700"/><rect x="1765" y="107" width="7" height="1.6" fill="#ce9178"/><rect x="1772" y="107" width="1" height="1.6" fill="#ffd700"/><rect x="1773" y="107" width="1" height="1.6" fill="#cccccc"/><rect x="1737" y="109" width="1" height="1.6" fill="#179fff"/><rect x="1739" y="109" width="5" height="1.6" fill="#c586c0"/><rect x="1745" y="109" width="1" height="1.6" fill="#179fff"/><rect x="1746" y="109" width="5" height="1.6" fill="#9cdcfe"/><rect x="1751" y="109" width="1" height="1.6" fill="#179fff"/><rect x="1753" y="109" width="1" height="1.6" fill="#179fff"/><rect x="1739" y="111" width="7" height="1.6" fill="#9cdcfe"/><rect x="1746" y="111" width="1" height="1.6" fill="#cccccc"/><rect x="1747" y="111" width="5" height="1.6" fill="#dcdcaa"/><rect x="1752" y="111" width="1" height="1.6" fill="#ffd700"/><rect x="1753" y="111" width="6" height="1.6" fill="#ce9178"/><rect x="1760" y="111" width="7" height="1.6" fill="#ce9178"/><rect x="1768" y="111" width="5" height="1.6" fill="#ce9178"/><rect x="1773" y="111" width="1" height="1.6" fill="#cccccc"/><rect x="1775" y="111" width="5" height="1.6" fill="#9cdcfe"/><rect x="1780" y="111" width="1" height="1.6" fill="#cccccc"/><rect x="1781" y="111" width="7" height="1.6" fill="#9cdcfe"/><rect x="1788" y="111" width="1" height="1.6" fill="#ffd700"/><rect x="1789" y="111" width="1" height="1.6" fill="#cccccc"/><rect x="1737" y="113" width="1" height="1.6" fill="#179fff"/><rect x="1735" y="115" width="1" height="1.6" fill="#da70d6"/><rect x="1736" y="115" width="1" height="1.6" fill="#cccccc"/><rect x="1735" y="119" width="2" height="1.6" fill="#6a9955"/><rect x="1738" y="119" width="8" height="1.6" fill="#6a9955"/><rect x="1747" y="119" width="2" height="1.6" fill="#6a9955"/><rect x="1750" y="119" width="8" height="1.6" fill="#6a9955"/><rect x="1759" y="119" width="2" height="1.6" fill="#6a9955"/><rect x="1762" y="119" width="3" height="1.6" fill="#6a9955"/><rect x="1766" y="119" width="11" height="1.6" fill="#6a9955"/><rect x="1778" y="119" width="6" height="1.6" fill="#6a9955"/><rect x="1735" y="121" width="5" height="1.6" fill="#569cd6"/><rect x="1741" y="121" width="25" height="1.6" fill="#dcdcaa"/><rect x="1767" y="121" width="1" height="1.6" fill="#cccccc"/><rect x="1769" y="121" width="1" height="1.6" fill="#da70d6"/><rect x="1770" y="121" width="1" height="1.6" fill="#da70d6"/><rect x="1772" y="121" width="2" height="1.6" fill="#569cd6"/><rect x="1775" y="121" width="1" height="1.6" fill="#da70d6"/><rect x="1737" y="123" width="5" height="1.6" fill="#9cdcfe"/><rect x="1742" y="123" width="1" height="1.6" fill="#cccccc"/><rect x="1743" y="123" width="10" height="1.6" fill="#9cdcfe"/><rect x="1753" y="123" width="1" height="1.6" fill="#cccccc"/><rect x="1754" y="123" width="8" height="1.6" fill="#dcdcaa"/><rect x="1762" y="123" width="1" height="1.6" fill="#179fff"/><rect x="1763" y="123" width="11" height="1.6" fill="#ce9178"/><rect x="1774" y="123" width="1" height="1.6" fill="#179fff"/><rect x="1775" y="123" width="1" height="1.6" fill="#cccccc"/><rect x="1735" y="125" width="1" height="1.6" fill="#da70d6"/><rect x="1736" y="125" width="1" height="1.6" fill="#cccccc"/><rect x="1735" y="129" width="2" height="1.6" fill="#6a9955"/><rect x="1738" y="129" width="6" height="1.6" fill="#6a9955"/><rect x="1745" y="129" width="3" height="1.6" fill="#6a9955"/><rect x="1749" y="129" width="9" height="1.6" fill="#6a9955"/><rect x="1759" y="129" width="4" height="1.6" fill="#6a9955"/><rect x="1764" y="129" width="8" height="1.6" fill="#6a9955"/><rect x="1773" y="129" width="10" height="1.6" fill="#6a9955"/><rect x="1784" y="129" width="10" height="1.6" fill="#6a9955"/><rect x="1795" y="129" width="5" height="1.6" fill="#6a9955"/><rect x="1801" y="129" width="10" height="1.6" fill="#6a9955"/><rect x="1812" y="129" width="7" height="1.6" fill="#6a9955"/><rect x="1820" y="129" width="3" height="1.6" fill="#6a9955"/><rect x="1824" y="129" width="8" height="1.6" fill="#6a9955"/><rect x="1833" y="129" width="6" height="1.6" fill="#6a9955"/><rect x="1735" y="131" width="6" height="1.6" fill="#c586c0"/><rect x="1742" y="131" width="1" height="1.6" fill="#da70d6"/><rect x="1737" y="133" width="1" height="1.6" fill="#808080"/><rect x="1738" y="133" width="15" height="1.6" fill="#4ec9b0"/><rect x="1754" y="133" width="6" height="1.6" fill="#9cdcfe"/><rect x="1760" y="133" width="1" height="1.6" fill="#cccccc"/><rect x="1761" y="133" width="1" height="1.6" fill="#179fff"/><rect x="1762" y="133" width="7" height="1.6" fill="#dcdcaa"/><rect x="1769" y="133" width="1" height="1.6" fill="#ffd700"/><rect x="1770" y="133" width="28" height="1.6" fill="#ce9178"/><rect x="1798" y="133" width="1" height="1.6" fill="#ffd700"/><rect x="1799" y="133" width="1" height="1.6" fill="#179fff"/><rect x="1801" y="133" width="5" height="1.6" fill="#9cdcfe"/><rect x="1806" y="133" width="1" height="1.6" fill="#cccccc"/><rect x="1807" y="133" width="1" height="1.6" fill="#179fff"/><rect x="1808" y="133" width="6" height="1.6" fill="#4fc1ff"/><rect x="1814" y="133" width="1" height="1.6" fill="#cccccc"/><rect x="1815" y="133" width="10" height="1.6" fill="#9cdcfe"/><rect x="1825" y="133" width="1" height="1.6" fill="#179fff"/><rect x="1826" y="133" width="1" height="1.6" fill="#cccccc"/><rect x="1739" y="135" width="1" height="1.6" fill="#808080"/><rect x="1740" y="135" width="4" height="1.6" fill="#4ec9b0"/><rect x="1745" y="135" width="5" height="1.6" fill="#9cdcfe"/><rect x="1750" y="135" width="1" height="1.6" fill="#cccccc"/><rect x="1751" y="135" width="1" height="1.6" fill="#179fff"/><rect x="1752" y="135" width="6" height="1.6" fill="#4fc1ff"/><rect x="1758" y="135" width="1" height="1.6" fill="#cccccc"/><rect x="1759" y="135" width="9" height="1.6" fill="#9cdcfe"/><rect x="1768" y="135" width="1" height="1.6" fill="#179fff"/><rect x="1769" y="135" width="1" height="1.6" fill="#cccccc"/><rect x="1741" y="137" width="1" height="1.6" fill="#808080"/><rect x="1742" y="137" width="8" height="1.6" fill="#4ec9b0"/><rect x="1743" y="139" width="4" height="1.6" fill="#9cdcfe"/><rect x="1747" y="139" width="1" height="1.6" fill="#cccccc"/><rect x="1748" y="139" width="1" height="1.6" fill="#179fff"/><rect x="1749" y="139" width="9" height="1.6" fill="#9cdcfe"/><rect x="1758" y="139" width="1" height="1.6" fill="#179fff"/><rect x="1743" y="141" width="12" height="1.6" fill="#9cdcfe"/><rect x="1755" y="141" width="1" height="1.6" fill="#cccccc"/><rect x="1756" y="141" width="1" height="1.6" fill="#179fff"/><rect x="1757" y="141" width="1" height="1.6" fill="#ffd700"/><rect x="1758" y="141" width="4" height="1.6" fill="#9cdcfe"/><rect x="1762" y="141" width="1" height="1.6" fill="#ffd700"/><rect x="1764" y="141" width="2" height="1.6" fill="#569cd6"/><rect x="1767" y="141" width="4" height="1.6" fill="#9cdcfe"/><rect x="1771" y="141" width="1" height="1.6" fill="#cccccc"/><rect x="1772" y="141" width="4" height="1.6" fill="#9cdcfe"/><rect x="1776" y="141" width="1" height="1.6" fill="#cccccc"/><rect x="1777" y="141" width="6" height="1.6" fill="#9cdcfe"/><rect x="1783" y="141" width="1" height="1.6" fill="#179fff"/><rect x="1743" y="143" width="10" height="1.6" fill="#9cdcfe"/><rect x="1753" y="143" width="1" height="1.6" fill="#cccccc"/><rect x="1754" y="143" width="1" height="1.6" fill="#179fff"/><rect x="1755" y="143" width="1" height="1.6" fill="#ffd700"/><rect x="1756" y="143" width="1" height="1.6" fill="#da70d6"/><rect x="1758" y="143" width="4" height="1.6" fill="#9cdcfe"/><rect x="1763" y="143" width="1" height="1.6" fill="#da70d6"/><rect x="1764" y="143" width="1" height="1.6" fill="#ffd700"/><rect x="1766" y="143" width="2" height="1.6" fill="#569cd6"/><rect x="1769" y="143" width="1" height="1.6" fill="#ffd700"/><rect x="1745" y="145" width="1" height="1.6" fill="#808080"/><rect x="1746" y="145" width="9" height="1.6" fill="#4ec9b0"/><rect x="1756" y="145" width="7" height="1.6" fill="#9cdcfe"/><rect x="1763" y="145" width="1" height="1.6" fill="#cccccc"/><rect x="1764" y="145" width="1" height="1.6" fill="#da70d6"/><rect x="1765" y="145" width="1" height="1.6" fill="#179fff"/><rect x="1766" y="145" width="1" height="1.6" fill="#179fff"/><rect x="1768" y="145" width="2" height="1.6" fill="#569cd6"/><rect x="1771" y="145" width="11" height="1.6" fill="#dcdcaa"/><rect x="1782" y="145" width="1" height="1.6" fill="#179fff"/><rect x="1783" y="145" width="4" height="1.6" fill="#9cdcfe"/><rect x="1787" y="145" width="1" height="1.6" fill="#179fff"/><rect x="1788" y="145" width="1" height="1.6" fill="#da70d6"/><rect x="1789" y="145" width="1" height="1.6" fill="#cccccc"/><rect x="1747" y="147" width="1" height="1.6" fill="#808080"/><rect x="1748" y="147" width="4" height="1.6" fill="#4ec9b0"/><rect x="1753" y="147" width="5" height="1.6" fill="#9cdcfe"/><rect x="1758" y="147" width="1" height="1.6" fill="#cccccc"/><rect x="1759" y="147" width="1" height="1.6" fill="#da70d6"/><rect x="1760" y="147" width="6" height="1.6" fill="#4fc1ff"/><rect x="1766" y="147" width="1" height="1.6" fill="#cccccc"/><rect x="1767" y="147" width="4" height="1.6" fill="#9cdcfe"/><rect x="1771" y="147" width="1" height="1.6" fill="#da70d6"/><rect x="1772" y="147" width="1" height="1.6" fill="#cccccc"/><rect x="1749" y="149" width="1" height="1.6" fill="#808080"/><rect x="1750" y="149" width="4" height="1.6" fill="#4ec9b0"/><rect x="1755" y="149" width="5" height="1.6" fill="#9cdcfe"/><rect x="1760" y="149" width="1" height="1.6" fill="#cccccc"/><rect x="1761" y="149" width="1" height="1.6" fill="#da70d6"/><rect x="1762" y="149" width="6" height="1.6" fill="#4fc1ff"/><rect x="1768" y="149" width="1" height="1.6" fill="#cccccc"/><rect x="1769" y="149" width="11" height="1.6" fill="#9cdcfe"/><rect x="1780" y="149" width="1" height="1.6" fill="#da70d6"/><rect x="1781" y="149" width="1" height="1.6" fill="#cccccc"/><rect x="1782" y="149" width="1" height="1.6" fill="#da70d6"/><rect x="1783" y="149" width="4" height="1.6" fill="#9cdcfe"/><rect x="1787" y="149" width="1" height="1.6" fill="#cccccc"/><rect x="1788" y="149" width="4" height="1.6" fill="#9cdcfe"/><rect x="1792" y="149" width="1" height="1.6" fill="#cccccc"/><rect x="1793" y="149" width="6" height="1.6" fill="#9cdcfe"/><rect x="1799" y="149" width="1" height="1.6" fill="#da70d6"/><rect x="1800" y="149" width="2" height="1.6" fill="#808080"/><rect x="1802" y="149" width="4" height="1.6" fill="#4ec9b0"/><rect x="1806" y="149" width="1" height="1.6" fill="#cccccc"/><rect x="1749" y="151" width="1" height="1.6" fill="#808080"/><rect x="1750" y="151" width="4" height="1.6" fill="#4ec9b0"/><rect x="1755" y="151" width="5" height="1.6" fill="#9cdcfe"/><rect x="1760" y="151" width="1" height="1.6" fill="#cccccc"/><rect x="1761" y="151" width="1" height="1.6" fill="#da70d6"/><rect x="1762" y="151" width="6" height="1.6" fill="#4fc1ff"/><rect x="1768" y="151" width="1" height="1.6" fill="#cccccc"/><rect x="1769" y="151" width="7" height="1.6" fill="#9cdcfe"/><rect x="1776" y="151" width="1" height="1.6" fill="#da70d6"/><rect x="1777" y="151" width="1" height="1.6" fill="#cccccc"/><rect x="1778" y="151" width="7" height="1.6" fill="#9cdcfe"/><rect x="1785" y="151" width="1" height="1.6" fill="#cccccc"/><rect x="1787" y="151" width="1" height="1.6" fill="#da70d6"/><rect x="1788" y="151" width="4" height="1.6" fill="#9cdcfe"/><rect x="1792" y="151" width="1" height="1.6" fill="#cccccc"/><rect x="1793" y="151" width="7" height="1.6" fill="#9cdcfe"/><rect x="1800" y="151" width="1" height="1.6" fill="#da70d6"/><rect x="1801" y="151" width="2" height="1.6" fill="#808080"/><rect x="1803" y="151" width="4" height="1.6" fill="#4ec9b0"/><rect x="1807" y="151" width="1" height="1.6" fill="#cccccc"/><rect x="1747" y="153" width="2" height="1.6" fill="#808080"/><rect x="1749" y="153" width="4" height="1.6" fill="#4ec9b0"/><rect x="1753" y="153" width="1" height="1.6" fill="#cccccc"/><rect x="1745" y="155" width="2" height="1.6" fill="#808080"/><rect x="1747" y="155" width="9" height="1.6" fill="#4ec9b0"/><rect x="1756" y="155" width="1" height="1.6" fill="#cccccc"/><rect x="1743" y="157" width="1" height="1.6" fill="#ffd700"/><rect x="1744" y="157" width="1" height="1.6" fill="#179fff"/><rect x="1743" y="159" width="22" height="1.6" fill="#9cdcfe"/><rect x="1765" y="159" width="1" height="1.6" fill="#cccccc"/><rect x="1766" y="159" width="1" height="1.6" fill="#179fff"/><rect x="1767" y="159" width="1" height="1.6" fill="#ffd700"/><rect x="1768" y="159" width="1" height="1.6" fill="#ffd700"/><rect x="1770" y="159" width="2" height="1.6" fill="#569cd6"/><rect x="1773" y="159" width="1" height="1.6" fill="#808080"/><rect x="1774" y="159" width="4" height="1.6" fill="#4ec9b0"/><rect x="1779" y="159" width="5" height="1.6" fill="#9cdcfe"/><rect x="1784" y="159" width="1" height="1.6" fill="#cccccc"/><rect x="1785" y="159" width="1" height="1.6" fill="#ffd700"/><rect x="1786" y="159" width="6" height="1.6" fill="#4fc1ff"/><rect x="1792" y="159" width="1" height="1.6" fill="#cccccc"/><rect x="1793" y="159" width="9" height="1.6" fill="#9cdcfe"/><rect x="1802" y="159" width="1" height="1.6" fill="#ffd700"/><rect x="1804" y="159" width="1" height="1.6" fill="#cccccc"/><rect x="1805" y="159" width="1" height="1.6" fill="#cccccc"/><rect x="1806" y="159" width="1" height="1.6" fill="#179fff"/><rect x="1741" y="161" width="1" height="1.6" fill="#cccccc"/><rect x="1742" y="161" width="1" height="1.6" fill="#cccccc"/><rect x="1741" y="163" width="1" height="1.6" fill="#808080"/><rect x="1742" y="163" width="6" height="1.6" fill="#4ec9b0"/><rect x="1749" y="163" width="5" height="1.6" fill="#9cdcfe"/><rect x="1754" y="163" width="1" height="1.6" fill="#cccccc"/><rect x="1755" y="163" width="5" height="1.6" fill="#ce9178"/><rect x="1761" y="163" width="10" height="1.6" fill="#ce9178"/><rect x="1772" y="163" width="7" height="1.6" fill="#9cdcfe"/><rect x="1779" y="163" width="1" height="1.6" fill="#cccccc"/><rect x="1780" y="163" width="1" height="1.6" fill="#179fff"/><rect x="1781" y="163" width="25" height="1.6" fill="#9cdcfe"/><rect x="1806" y="163" width="1" height="1.6" fill="#179fff"/><rect x="1808" y="163" width="5" height="1.6" fill="#9cdcfe"/><rect x="1813" y="163" width="1" height="1.6" fill="#cccccc"/><rect x="1814" y="163" width="1" height="1.6" fill="#179fff"/><rect x="1815" y="163" width="6" height="1.6" fill="#4fc1ff"/><rect x="1821" y="163" width="1" height="1.6" fill="#cccccc"/><rect x="1822" y="163" width="15" height="1.6" fill="#9cdcfe"/><rect x="1837" y="163" width="1" height="1.6" fill="#cccccc"/><rect x="1838" y="163" width="5" height="1.6" fill="#9cdcfe"/><rect x="1843" y="163" width="1" height="1.6" fill="#179fff"/><rect x="1845" y="163" width="1" height="1.6" fill="#cccccc"/><rect x="1846" y="163" width="1" height="1.6" fill="#cccccc"/><rect x="1741" y="165" width="1" height="1.6" fill="#808080"/><rect x="1742" y="165" width="6" height="1.6" fill="#4ec9b0"/><rect x="1749" y="165" width="5" height="1.6" fill="#9cdcfe"/><rect x="1754" y="165" width="1" height="1.6" fill="#cccccc"/><rect x="1755" y="165" width="8" height="1.6" fill="#ce9178"/><rect x="1764" y="165" width="7" height="1.6" fill="#9cdcfe"/><rect x="1771" y="165" width="1" height="1.6" fill="#cccccc"/><rect x="1772" y="165" width="1" height="1.6" fill="#179fff"/><rect x="1773" y="165" width="13" height="1.6" fill="#9cdcfe"/><rect x="1786" y="165" width="1" height="1.6" fill="#179fff"/><rect x="1788" y="165" width="5" height="1.6" fill="#9cdcfe"/><rect x="1793" y="165" width="1" height="1.6" fill="#cccccc"/><rect x="1794" y="165" width="9" height="1.6" fill="#ce9178"/><rect x="1804" y="165" width="1" height="1.6" fill="#cccccc"/><rect x="1805" y="165" width="1" height="1.6" fill="#cccccc"/><rect x="1739" y="167" width="2" height="1.6" fill="#808080"/><rect x="1741" y="167" width="4" height="1.6" fill="#4ec9b0"/><rect x="1745" y="167" width="1" height="1.6" fill="#cccccc"/><rect x="1737" y="169" width="2" height="1.6" fill="#808080"/><rect x="1739" y="169" width="15" height="1.6" fill="#4ec9b0"/><rect x="1754" y="169" width="1" height="1.6" fill="#cccccc"/><rect x="1735" y="171" width="1" height="1.6" fill="#da70d6"/><rect x="1736" y="171" width="1" height="1.6" fill="#cccccc"/><rect x="1733" y="173" width="1" height="1.6" fill="#ffd700"/><rect x="1734" y="173" width="1" height="1.6" fill="#cccccc"/><rect x="1733" y="177" width="2" height="1.6" fill="#6a9955"/><rect x="1736" y="177" width="6" height="1.6" fill="#6a9955"/><rect x="1743" y="177" width="3" height="1.6" fill="#6a9955"/><rect x="1747" y="177" width="9" height="1.6" fill="#6a9955"/><rect x="1757" y="177" width="2" height="1.6" fill="#6a9955"/><rect x="1760" y="177" width="3" height="1.6" fill="#6a9955"/><rect x="1764" y="177" width="7" height="1.6" fill="#6a9955"/><rect x="1772" y="177" width="6" height="1.6" fill="#6a9955"/><rect x="1733" y="179" width="6" height="1.6" fill="#c586c0"/><rect x="1740" y="179" width="7" height="1.6" fill="#c586c0"/><rect x="1748" y="179" width="19" height="1.6" fill="#9cdcfe"/><rect x="1767" y="179" width="1" height="1.6" fill="#cccccc"/></svg>
<div class="a" style="left:1844px;top:31px;width:1px;height:489px;background:#2b2b2b"></div>
<div class="a" style="left:1846px;top:259px;width:4px;height:2px;background:#a0a0a0"></div>
<div class="a" style="left:2px;top:520px;width:1848px;height:400px;background:#181818;border-top:1px solid #2b2b2b"></div>
<div class="a" style="left:27px;top:533px;height:18px;line-height:18px;font-size:14px;color:#9d9d9d;white-space:pre;transform-origin:0 0;transform:scaleX(0.863)">PROBLEMS</div>
<div class="a" style="left:124px;top:533px;height:18px;line-height:18px;font-size:14px;color:#9d9d9d;white-space:pre;transform-origin:0 0;transform:scaleX(0.880)">OUTPUT</div>
<div class="a" style="left:206px;top:533px;height:18px;line-height:18px;font-size:14px;color:#9d9d9d;white-space:pre;transform-origin:0 0;transform:scaleX(0.871)">DEBUG CONSOLE</div>
<div class="a" style="left:343px;top:533px;height:18px;line-height:18px;font-size:14px;color:#e7e7e7;white-space:pre;transform-origin:0 0;transform:scaleX(0.876)">TERMINAL</div>
<div class="a" style="left:437px;top:533px;height:18px;line-height:18px;font-size:14px;color:#9d9d9d;white-space:pre;transform-origin:0 0;transform:scaleX(0.830)">PORTS</div>
<div class="a" style="left:506px;top:533px;height:18px;line-height:18px;font-size:14px;color:#9d9d9d;white-space:pre;transform-origin:0 0;transform:scaleX(0.845)">CODE REFERENCE LOG</div>
<div class="a" style="left:675px;top:533px;height:18px;line-height:18px;font-size:14px;color:#9d9d9d;white-space:pre;transform-origin:0 0;transform:scaleX(0.880)">POLYGLOT NOTEBOOK</div>
<div class="a" style="left:340px;top:558px;width:69px;height:1px;background:#0078d4"></div>
<div class="a" style="left:27px;top:586px;width:243px;height:10px;background:#cccccc"></div>
<div class="a" style="left:27px;top:576px;width:9px;height:10px;background:#cccccc"></div>
<div class="a" style="left:99px;top:576px;width:9px;height:10px;background:#cccccc"></div>
<div class="a" style="left:117px;top:576px;width:9px;height:10px;background:#cccccc"></div>
<div class="a" style="left:171px;top:576px;width:36px;height:10px;background:#cccccc"></div>
<div class="a" style="left:261px;top:576px;width:9px;height:10px;background:#cccccc"></div>
<div class="tl" style="top:616px">› Metro waiting on <span style="text-decoration:underline">exp://192.168.2.21:8081</span></div>
<div class="tl" style="top:636px">› Scan the QR code above with Expo Go (Android) or the Camera app (iOS)</div>
<div class="tl" style="top:676px">› Using <span style="color:#11a8e0">Expo Go</span></div>
<div class="tl" style="top:696px">› Press <b style="color:#ffffff">s</b>   switch to development build</div>
<div class="a" style="left:121px;top:696px;width:1px;height:20px;background:#cccccc"></div>
<div class="tl" style="top:736px">› Press <b style="color:#ffffff">a</b>   open Android</div>
<div class="a" style="left:121px;top:736px;width:1px;height:20px;background:#cccccc"></div>
<div class="tl" style="top:756px">› Press <b style="color:#ffffff">w</b>   open web</div>
<div class="a" style="left:121px;top:756px;width:1px;height:20px;background:#cccccc"></div>
<div class="tl" style="top:796px">› Press <b style="color:#ffffff">j</b>   open debugger</div>
<div class="a" style="left:121px;top:796px;width:1px;height:20px;background:#cccccc"></div>
<div class="tl" style="top:816px">› Press <b style="color:#ffffff">r</b>   reload app</div>
<div class="a" style="left:121px;top:816px;width:1px;height:20px;background:#cccccc"></div>
<div class="tl" style="top:836px">› Press <b style="color:#ffffff">m</b>   toggle menu</div>
<div class="a" style="left:121px;top:836px;width:1px;height:20px;background:#cccccc"></div>
<div class="tl" style="top:856px">› Press <b style="color:#ffffff">o</b>   open project code in your editor</div>
<div class="a" style="left:121px;top:856px;width:1px;height:20px;background:#cccccc"></div>
<div class="tl" style="top:896px">› Press <b style="color:#ffffff">?</b>   show all commands</div>
<div class="a" style="left:121px;top:896px;width:1px;height:20px;background:#cccccc"></div>
<svg class="a" style="left:1700px;top:530px" width="150" height="26">
<path d="M19 4 V21 M10.5 12.5 H27.5" stroke="#cccccc" stroke-width="1.4"/>
<path d="M35.5 10.5 L40 15 L44.5 10.5" stroke="#cccccc" stroke-width="1.2" fill="none"/>
<circle cx="62" cy="13" r="1.3" fill="#cccccc"/><circle cx="68.5" cy="13" r="1.3" fill="#cccccc"/><circle cx="75" cy="13" r="1.3" fill="#cccccc"/>
<path d="M94.5 15.5 L101 9 L107.5 15.5" stroke="#cccccc" stroke-width="1.3" fill="none"/>
<path d="M128.5 6.5 L139.5 17.5 M139.5 6.5 L128.5 17.5" stroke="#cccccc" stroke-width="1.3"/>
</svg>
<div class="a" style="left:1712px;top:560px;width:1px;height:360px;background:#2b2b2b"></div>
<div class="a" style="left:1713px;top:564px;width:137px;height:28px;background:#313135"></div>
<div class="a" style="left:1713px;top:564px;width:1px;height:28px;background:#0078d4"></div>
<div class="a" style="left:1700px;top:577px;width:4px;height:4px;background:#1e8fd6"></div>
<div class="a" style="left:1700px;top:759px;width:4px;height:8px;background:#5a5a5a"></div>
<svg class="a" style="left:1725px;top:568px" width="22" height="20"><path d="M3 1.5 H20 L18 18.5 H1 Z" stroke="#cccccc" stroke-width="1.2" fill="none"/><path d="M5.5 5.5 L9.5 8.5 L5.5 11.5 M9 13 H14" stroke="#cccccc" stroke-width="1.2" fill="none"/></svg>
<svg class="a" style="left:1725px;top:596px" width="22" height="20"><path d="M3 1.5 H20 L18 18.5 H1 Z" stroke="#cccccc" stroke-width="1.2" fill="none"/><path d="M5.5 5.5 L9.5 8.5 L5.5 11.5 M9 13 H14" stroke="#cccccc" stroke-width="1.2" fill="none"/></svg>
<div class="a" style="left:1751px;top:568px;height:20px;line-height:20px;font-size:15.5px;color:#e0e0e0">node</div>
<div class="a" style="left:1751px;top:596px;height:20px;line-height:20px;font-size:15.5px;color:#cccccc">powershell</div>
<div class="a" style="left:0;top:919px;width:1850px;height:1px;background:#2b2b2b"></div>
<div class="a" style="left:698px;top:20px;width:649px;height:867px;background:#3c3f41;border-left:1px solid #6b6b6b;border-top:1px solid #6b6b6b;border-right:1px solid #6b6b6b"></div>
<div class="a" style="left:702px;top:24px;width:641px;height:34px;background:#3b4655"></div>
<div class="a" style="left:702px;top:58px;width:641px;height:1px;background:#2b2b2b"></div>
<div class="a" style="left:702px;top:94px;width:641px;height:790px;background:#2e2f31;border-top:1px solid #2b2b2b"></div>
<div class="a" style="left:709px;top:32px;height:20px;line-height:20px;font-size:15px;color:#bcbec4;white-space:pre;transform-origin:0 0;transform:scaleX(0.957)">Running Devices:</div>
<svg class="a" style="left:849px;top:31px" width="20" height="22">
<rect x="2.5" y="2.5" width="10" height="17" rx="2" stroke="#afb1b3" stroke-width="1.5" fill="none"/>
<rect x="9" y="12" width="9" height="9" fill="#3b4655"/>
<rect x="10.5" y="13.5" width="6" height="6" stroke="#b99bf8" stroke-width="1" fill="none"/>
<rect x="12" y="15" width="4" height="5" fill="#22c322"/>
</svg>
<div class="a" style="left:871px;top:32px;height:20px;line-height:20px;font-size:15px;color:#bcbec4;white-space:pre;transform-origin:0 0;transform:scaleX(0.966)">Pixel 7 Pro API 30</div>
<svg class="a" style="left:993px;top:36px" width="12" height="12"><path d="M2 2 L10 10 M10 2 L2 10" stroke="#6e7a86" stroke-width="1.2"/></svg>
<div class="a" style="left:831px;top:55.5px;width:187px;height:3px;background:#4a88c7;border-radius:1.5px"></div>
<svg class="a" style="left:1028px;top:33px" width="18" height="18"><path d="M9 2 V16 M2 9 H16" stroke="#cecece" stroke-width="2"/></svg>
<svg class="a" style="left:1253px;top:32px" width="18" height="18"><rect x="1.5" y="1.5" width="15" height="15" stroke="#afb1b3" stroke-width="1.5" fill="none"/><rect x="10" y="7" width="6" height="9" fill="#afb1b3"/></svg>
<svg class="a" style="left:1285px;top:32px" width="18" height="18" viewBox="0 0 24 24"><path fill="#afb1b3" d="M19.14 12.94c.04-.3.06-.61.06-.94 0-.32-.02-.64-.07-.94l2.03-1.58a.49.49 0 0 0 .12-.61l-1.92-3.32a.488.488 0 0 0-.59-.22l-2.39.96c-.5-.38-1.03-.7-1.62-.94l-.36-2.54a.484.484 0 0 0-.48-.41h-3.84c-.24 0-.43.17-.47.41l-.36 2.54c-.59.24-1.13.57-1.62.94l-2.39-.96c-.22-.08-.47 0-.59.22L2.74 8.87c-.12.21-.08.47.12.61l2.03 1.58c-.05.3-.09.63-.09.94s.02.64.07.94l-2.03 1.58a.49.49 0 0 0-.12.61l1.92 3.32c.12.22.37.29.59.22l2.39-.96c.5.38 1.03.7 1.62.94l.36 2.54c.05.24.24.41.48.41h3.84c.24 0 .44-.17.47-.41l.36-2.54c.59-.24 1.13-.56 1.62-.94l2.39.96c.22.08.47 0 .59-.22l1.92-3.32c.12-.22.07-.47-.12-.61l-2.01-1.58zM12 15.6c-1.98 0-3.6-1.62-3.6-3.6s1.62-3.6 3.6-3.6 3.6 1.62 3.6 3.6-1.62 3.6-3.6 3.6z"/></svg>
<div class="a" style="left:1319px;top:40px;width:16px;height:2px;background:#cfcfcf"></div>
<svg class="a" style="left:702px;top:59px" width="641" height="35" viewBox="702 59 641 35">
<path d="M716.2 71.6 A6.5 6.5 0 1 0 726.2 71.6" stroke="#afb1b3" stroke-width="2.2" fill="none"/>
<path d="M721 68.4 V75.7" stroke="#afb1b3" stroke-width="2.3"/>
<path d="M745.1 72.9 H749.7 L754.3 68.6 V83.3 L749.7 78.8 H745.1 Z" fill="#afb1b3"/>
<path d="M755 74.2 A2.8 2.3 0 0 1 755 78.8 Z" fill="#afb1b3"/>
<path d="M755.6 70.3 A6.2 5.9 0 0 1 755.6 82" stroke="#afb1b3" stroke-width="1.3" fill="none"/>
<path d="M779.7 72.9 H784 L789.1 68.6 V83.3 L784 78.8 H779.7 Z" fill="#afb1b3"/>
<path d="M789.8 73.2 A2.8 2.9 0 0 1 789.8 79 Z" fill="#afb1b3"/>
<rect x="810" y="69.3" width="7" height="13.4" rx="1.3" stroke="#afb1b3" stroke-width="1.8" fill="none"/>
<path d="M820.3 68.2 H826.8 L820.3 74.7 Z" fill="#3592c4"/>
<path d="M822.5 71 Q827.5 76 821 82.7" stroke="#3592c4" stroke-width="2.2" fill="none"/>
<rect x="852" y="69.3" width="7" height="13.4" rx="1.3" stroke="#afb1b3" stroke-width="1.8" fill="none"/>
<path d="M848.7 68.2 H842.2 L848.7 74.7 Z" fill="#3592c4"/>
<path d="M846.5 71 Q841.5 76 848 82.7" stroke="#3592c4" stroke-width="2.2" fill="none"/>
<path d="M877 75.5 L888 70 V81 Z" fill="#afb1b3"/>
<circle cx="916" cy="76" r="5" fill="#afb1b3"/>
<rect x="943" y="71" width="10" height="10" rx="1" fill="#afb1b3"/>
<path d="M973.5 71.2 H977 L978 67.8 H984 L985 71.2 H988.5 A1.6 1.6 0 0 1 990.1 72.8 V82 A1.6 1.6 0 0 1 988.5 83.6 H973.5 A1.6 1.6 0 0 1 971.8 82 V72.8 A1.6 1.6 0 0 1 973.5 71.2 Z" fill="#afb1b3"/>
<circle cx="981" cy="77.2" r="3.6" stroke="#3c3f41" stroke-width="1.5" fill="none"/>
<rect x="1003.9" y="70.7" width="13.2" height="11.7" rx="1.8" fill="#afb1b3"/>
<path d="M1015 76.5 L1022.2 71 V82.2 Z" fill="#afb1b3"/>
<path d="M1040.8 70.2 A7.6 7.6 0 1 1 1038.6 77.5" stroke="#afb1b3" stroke-width="2.3" fill="none"/>
<path d="M1037.2 66.8 L1037.2 74.8 L1044.2 72.5 Z" fill="#afb1b3"/>
<path d="M1045.8 80 V74.5 H1049.7" stroke="#afb1b3" stroke-width="1.3" fill="none"/>
<rect x="1068.8" y="69.5" width="18.4" height="11.2" rx="2.5" fill="#afb1b3"/>
<path d="M1071.5 72.3 H1084.5 M1071.5 74.8 H1084.5" stroke="#3c3f41" stroke-width="0.9" stroke-dasharray="1.1 1"/>
<path d="M1073 77.5 H1081" stroke="#3c3f41" stroke-width="1"/>
<rect x="1082" y="75.2" width="6.5" height="10" rx="3" fill="#afb1b3" stroke="#3c3f41" stroke-width="0.9"/>
<circle cx="1111" cy="70.3" r="1.9" fill="#afb1b3"/><circle cx="1111" cy="76.2" r="1.9" fill="#afb1b3"/><circle cx="1111" cy="81.8" r="1.9" fill="#afb1b3"/>
</svg>
<div class="a" style="left:1288px;top:723px;width:34px;height:134px;border:1px solid #3a3c3f;border-radius:5px;background:#2b2c2e"></div>
<svg class="a" style="left:1296px;top:733px" width="16" height="16"><path d="M8 1.5 V14.5 M1.5 8 H14.5" stroke="#cfd1d3" stroke-width="2"/></svg>
<div class="a" style="left:1298px;top:773px;width:12px;height:2px;background:#5f6163"></div>
<div class="a" style="left:1294px;top:797px;width:20px;height:18px;line-height:18px;text-align:center;font-size:13px;font-weight:bold;color:#cfd1d3;letter-spacing:-1px">1:1</div>
<svg class="a" style="left:1295px;top:831px" width="18" height="16"><rect x="1" y="1" width="16" height="13" stroke="#56585b" stroke-width="1.4" fill="none"/><path d="M4 6 V4 H6.5 M14 9 V11 H11.5" stroke="#56585b" stroke-width="1.2" fill="none"/></svg>
<div class="a" style="left:1204px;top:353px;width:5px;height:47px;border-radius:1px;background:linear-gradient(90deg,#6b6b6b,#aaaaaa,#6b6b6b)"></div>
<div class="a" style="left:1204px;top:450px;width:5px;height:95px;border-radius:1px;background:linear-gradient(90deg,#6b6b6b,#aaaaaa,#6b6b6b)"></div>
<div class="a" style="left:836px;top:96.5px;width:370px;height:787px;border-radius:33px;background:linear-gradient(#9a9b9a 0,#707270 24px,#707270 calc(100% - 24px),#7c7d7c 100%)"></div>
<div class="a" style="left:839.5px;top:100px;width:363px;height:780px;border-radius:29.5px;background:#1e1e1e"></div>
<div class="a" style="left:840.2px;top:101.5px;width:361.6px;height:776.5px;border-radius:28.8px;background:linear-gradient(#6e6e6e 0,#b5b5b5 26px,#b5b5b5 calc(100% - 26px),#9a9a9a 100%)"></div>
<div class="a" style="left:841.6px;top:103.2px;width:358.8px;height:773.2px;border-radius:27.4px;background:linear-gradient(90deg,#7a7a7a,#151515 1.6px,#151515 calc(100% - 1.6px),#7a7a7a)"></div>
<div class="a" style="left:843px;top:103.4px;width:356px;height:773px;border-radius:26px;background:linear-gradient(#5a5a5a 0,#151515 4px,#151515 calc(100% - 14px),#4a4a4a 100%)"></div>
<div class="a" id="screen" style="left:848px;top:110.6px;width:347px;height:752.4px;border-radius:16px;overflow:hidden;background:#f2f2f2">
<div class="a" style="left:0;top:0;width:347px;height:79.9px;background:#ffffff"></div>
<div class="a" style="left:0;top:711.7px;width:347px;height:40.7px;background:#000000"></div>
<div class="a" style="left:9.5px;top:9.9px;width:21px;height:21px;border-radius:50%;background:#000"></div>
<div class="a" style="left:39.5px;top:10.9px;height:14px;line-height:14px;font-size:12.3px;color:#6b6b6b">3:12</div>
<svg class="a" style="left:72.0px;top:10.4px" width="13" height="13"><circle cx="6.5" cy="6.5" r="6.2" fill="#707070"/><path d="M3.8 9.5 L6.5 3.5 L9.2 9.5" stroke="#fff" stroke-width="1.3" fill="none"/></svg>
<svg class="a" style="left:92.0px;top:11.4px" width="10" height="12"><path d="M2.5 0.5 H8.5 A1 1 0 0 1 9.5 1.5 V10.5 A1 1 0 0 1 8.5 11.5 H1.5 A1 1 0 0 1 0.5 10.5 V2.5 Z" fill="#707070"/><path d="M4 1 V3.5 M6 1 V3.5 M8 1 V3.5" stroke="#fff" stroke-width="0.7"/></svg>
<div class="a" style="left:164.0px;top:8.4px;width:20px;height:20px;border-radius:50%;background:#161616"></div>
<div class="a" style="left:171.5px;top:17.4px;width:2px;height:2px;background:#3d6fa0"></div>
<div class="a" style="left:175.5px;top:17.4px;width:2px;height:2px;background:#3d6fa0"></div>
<svg class="a" style="left:303.0px;top:10.4px" width="40" height="13"><path d="M0.5 2.5 Q7 -1 13.5 2.5 L7 11 Z" fill="#707070"/><path d="M15 11.5 L25.5 1 V11.5 Z" fill="#707070"/><path d="M21.5 11 V6 L24 3.5 V11 Z" fill="#ffffff"/><rect x="31.5" y="1.5" width="6.5" height="10" fill="#707070"/><rect x="33.5" y="0.5" width="2.5" height="1.5" fill="#707070"/></svg>
<svg class="a" style="left:14.5px;top:48.9px" width="16" height="16"><path d="M14.5 8 H2.5 M8 2.5 L2.5 8 L8 13.5" stroke="#1c1c1c" stroke-width="1.7" fill="none"/></svg>
<div class="a" style="left:57.0px;top:47.9px;height:22px;line-height:22px;font-size:17.5px;color:#1c1c1c;-webkit-text-stroke:0.3px #1c1c1c;white-space:pre;transform-origin:0 0;transform:scaleX(0.95)">Country Details</div>
<div class="a" style="left:17.0px;top:99.4px;height:24px;line-height:24px;font-size:19.5px;font-weight:bold;color:#000;white-space:pre;transform-origin:0 0;transform:scaleX(0.976)">Norway</div>
<div class="a" style="left:17.0px;top:134.4px;height:18px;line-height:18px;font-size:14.5px;color:#000;white-space:pre">Capital: Oslo</div>
<svg class="a" style="left:17.0px;top:203.4px" width="313" height="253" viewBox="865 314 313 253"><rect x="865" y="314" width="313" height="253" fill="#8ab4f8"/><polygon points="1058.0,313.0 1055.4,328.3 1048.4,343.5 1041.5,354.6 1033.2,365.7 1022.0,379.6 1015.0,392.0 1002.7,399.0 994.3,404.5 983.2,415.6 974.9,422.5 963.8,430.9 952.7,440.6 947.2,451.7 945.8,468.3 947.2,485.0 947.2,501.6 950.0,518.2 952.7,532.0 961.0,546.0 969.4,557.0 972.0,568.0 991.0,568.0 991.0,565.8 1006.0,549.6 1014.7,539.7 1024.6,534.7 1029.6,527.2 1030.8,521.0 1037.0,532.2 1039.5,542.2 1043.2,554.6 1044.5,568.0 1122.8,568.0 1121.6,560.8 1124.0,549.6 1141.5,539.7 1150.0,529.7 1149.0,511.0 1144.0,497.4 1127.8,492.4 1126.5,480.0 1126.0,474.0 1127.5,457.0 1130.0,443.0 1138.5,429.5 1144.0,418.0 1152.0,407.0 1166.0,396.0 1179.0,388.0 1179.0,313.0" fill="#98d3aa"/><polygon points="958.0,452.0 975.0,436.0 995.0,420.0 1010.0,405.0 1028.0,392.0 1040.0,372.0 1050.0,352.0 1058.0,332.0 1064.0,313.0 1082.0,313.0 1080.0,335.0 1072.0,355.0 1062.0,378.0 1052.0,398.0 1048.0,420.0 1050.0,445.0 1052.0,470.0 1048.0,500.0 1042.0,518.0 1030.0,516.0 1015.0,530.0 995.0,548.0 985.0,556.0 972.0,556.0 962.0,538.0 956.0,520.0 955.0,495.0 957.0,470.0" fill="#bbe2c6"/><polygon points="1090.0,313.0 1118.0,313.0 1114.0,335.0 1108.0,352.0 1112.0,375.0 1104.0,400.0 1098.0,425.0 1100.0,450.0 1104.0,475.0 1098.0,498.0 1080.0,498.0 1066.0,485.0 1062.0,465.0 1058.0,440.0 1062.0,420.0 1072.0,395.0 1084.0,380.0 1088.0,350.0 1092.0,330.0" fill="#bbe2c6"/><polygon points="1128.0,313.0 1162.0,313.0 1158.0,330.0 1148.0,342.0 1136.0,336.0" fill="#bbe2c6"/><polygon points="1150.0,345.0 1179.0,330.0 1179.0,362.0 1165.0,372.0 1152.0,362.0" fill="#bbe2c6"/><polygon points="1120.0,340.0 1135.0,350.0 1130.0,372.0 1118.0,365.0" fill="#bbe2c6"/><polygon points="1078.0,512.0 1090.0,505.0 1096.0,520.0 1084.0,526.0" fill="#bbe2c6"/><polygon points="1108.0,510.0 1118.0,505.0 1122.0,518.0 1110.0,522.0" fill="#bbe2c6"/><polygon points="1098.0,545.0 1112.0,538.0 1116.0,552.0 1102.0,558.0" fill="#bbe2c6"/><polygon points="1120.0,418.0 1128.0,414.0 1126.0,430.0 1118.0,432.0" fill="#bbe2c6"/><polygon points="1030.0,380.0 1048.0,366.0 1052.0,372.0 1036.0,388.0" fill="#98d3aa"/><polygon points="1045.0,345.0 1056.0,330.0 1060.0,336.0 1050.0,352.0" fill="#98d3aa"/><polygon points="975.0,425.0 995.0,410.0 1000.0,415.0 982.0,430.0" fill="#98d3aa"/><polygon points="1000.0,470.0 1035.0,500.0 1040.0,510.0 1030.0,512.0 995.0,480.0" fill="#98d3aa"/><polygon points="965.0,500.0 1000.0,520.0 1005.0,528.0 995.0,530.0 960.0,510.0" fill="#98d3aa"/><polygon points="1005.0,405.0 1030.0,420.0 1040.0,440.0 1030.0,440.0 1000.0,418.0" fill="#98d3aa"/><polygon points="1062.0,330.0 1072.0,340.0 1066.0,370.0 1058.0,360.0" fill="#98d3aa"/><polygon points="988.0,436.0 1003.0,431.0 1005.0,440.0 992.0,444.0" fill="#bfd3c6"/><polygon points="983.0,474.0 990.0,471.0 994.0,482.0 986.0,486.0" fill="#bfd3c6"/><polygon points="972.0,505.0 978.0,500.0 982.0,528.0 976.0,532.0" fill="#bfd3c6"/><polygon points="1040.0,418.0 1046.0,413.0 1048.0,422.0 1043.0,426.0" fill="#bfd3c6"/><polygon points="1060.0,326.0 1066.0,324.0 1068.0,345.0 1062.0,348.0" fill="#bfd3c6"/><polygon points="967.0,468.0 974.0,458.0 984.0,449.0 990.0,452.0 982.0,462.0 971.0,470.0" fill="#f4f6f5"/><polygon points="964.0,530.0 967.0,522.0 969.0,524.0 966.0,534.0" fill="#f4f6f5"/><polygon points="1069.0,528.5 1079.0,529.7 1081.8,538.4 1076.8,549.6 1061.9,554.6 1058.2,545.9 1061.9,536.0" fill="#8ab4f8"/><polygon points="1010.0,400.0 1025.0,393.0 1042.0,389.0 1044.0,393.0 1027.0,398.0 1013.0,404.0" fill="#8ab4f8"/><polygon points="1036.0,383.0 1044.0,380.0 1046.0,384.0 1038.0,387.0" fill="#8ab4f8"/><polygon points="948.0,478.0 968.0,474.0 988.0,479.0 968.0,476.0" fill="#8ab4f8"/><polygon points="950.0,506.0 972.0,502.0 983.0,510.0 968.0,504.0" fill="#8ab4f8"/><polygon points="962.0,442.0 982.0,439.0 994.0,444.0 980.0,441.0" fill="#8ab4f8"/><polygon points="1087.0,546.0 1091.0,545.0 1096.0,567.0 1091.0,567.0" fill="#8ab4f8"/><polygon points="1060.0,487.0 1064.0,484.0 1066.0,492.0 1061.0,494.0" fill="#8ab4f8"/><polygon points="1137.0,552.0 1150.0,550.0 1147.0,555.0 1132.0,557.0" fill="#8ab4f8"/><polygon points="1038.0,336.0 1044.0,330.0 1046.0,338.0 1040.0,342.0" fill="#8ab4f8"/><polygon points="1115.0,390.0 1120.0,388.0 1122.0,395.0 1116.0,396.0" fill="#8ab4f8"/><polygon points="1165.0,500.0 1172.0,502.0 1174.0,510.0 1168.0,511.0" fill="#98d3aa"/><polygon points="1040.0,350.0 1044.0,346.0 1046.0,352.0 1041.0,355.0" fill="#98d3aa"/><polygon points="1024.0,372.0 1030.0,368.0 1032.0,374.0 1026.0,377.0" fill="#98d3aa"/><polygon points="1000.0,395.0 1008.0,392.0 1006.0,398.0 999.0,400.0" fill="#98d3aa"/><polygon points="984.0,408.0 992.0,404.0 994.0,410.0 986.0,413.0" fill="#98d3aa"/><polygon points="966.0,425.0 974.0,421.0 973.0,427.0 966.0,430.0" fill="#98d3aa"/><polygon points="950.0,436.0 958.0,432.0 957.0,440.0 949.0,442.0" fill="#98d3aa"/><polygon points="942.0,458.0 947.0,455.0 948.0,462.0 942.0,465.0" fill="#98d3aa"/><polygon points="941.0,480.0 946.0,478.0 947.0,486.0 941.0,488.0" fill="#98d3aa"/><polygon points="944.0,505.0 949.0,502.0 950.0,510.0 944.0,512.0" fill="#98d3aa"/><polygon points="946.0,525.0 951.0,522.0 952.0,530.0 946.0,532.0" fill="#98d3aa"/><polygon points="1055.0,318.0 1060.0,314.0 1060.0,322.0 1054.0,325.0" fill="#98d3aa"/><polyline points="1088.5,313.0 1090.0,321.3 1089.3,331.2 1087.8,339.7 1080.8,352.4 1075.1,363.7 1082.2,368.0 1082.2,379.3 1080.0,383.5 1065.2,381.4 1053.9,396.2 1053.2,401.9 1050.4,409.0 1053.9,417.4 1052.5,425.9 1053.9,437.2 1055.0,440.7 1052.7,457.4 1063.4,468.0 1061.9,478.0 1055.0,480.2 1059.6,494.0 1058.0,506.0 1048.9,515.0 1046.6,521.3 1048.9,533.5 1042.8,542.6 1039.8,536.5 1030.7,542.6" fill="none" stroke="#5f6368" stroke-width="1"/><text x="1121" y="371" font-size="9" text-anchor="middle" fill="#202124" style="paint-order:stroke;stroke:#ffffff;stroke-width:2.2px;stroke-linejoin:round;font-family:Liberation Sans">Sweden</text><text x="1012.5" y="456.5" font-size="10.8" font-weight="bold" text-anchor="middle" fill="#000" style="paint-order:stroke;stroke:#ffffff;stroke-width:2.2px;stroke-linejoin:round;font-family:Liberation Sans">Norway</text><text x="1032.5" y="505.6" font-size="10.5" text-anchor="middle" fill="#202124" style="paint-order:stroke;stroke:#ffffff;stroke-width:2.2px;stroke-linejoin:round;font-family:Liberation Sans">Oslo</text><circle cx="1033" cy="513" r="2.4" fill="#fff" stroke="#202124" stroke-width="1.1"/><circle cx="1033" cy="513" r="1" fill="#202124"/><text x="1139.7" y="522.7" font-size="10.5" text-anchor="middle" fill="#202124" style="paint-order:stroke;stroke:#ffffff;stroke-width:2.2px;stroke-linejoin:round;font-family:Liberation Sans">Stockholm</text><circle cx="1140.2" cy="529.4" r="2.4" fill="#fff" stroke="#202124" stroke-width="1.1"/><circle cx="1140.2" cy="529.4" r="1" fill="#202124"/><text x="1145.5" y="558.6" font-size="12" fill="#1967d2" style="font-family:Liberation Sans;letter-spacing:-0.3px" transform="translate(1145.5 0) scale(0.88 1) translate(-1145.5 0)">Baltic S</text><text x="869.5" y="557" font-size="14.5" style="paint-order:stroke;stroke:#ffffff;stroke-width:2.2px;stroke-linejoin:round;stroke-width:2.4px;font-family:Liberation Sans;letter-spacing:0.2px"><tspan fill="#4285f4">G</tspan><tspan fill="#ea4335">o</tspan><tspan fill="#fbbc05">o</tspan><tspan fill="#4285f4">g</tspan><tspan fill="#34a853">l</tspan><tspan fill="#ea4335">e</tspan></text><path d="M1021.5 447.8 C1019 440 1010.7 434 1010.7 424.5 A10.8 10.8 0 0 1 1032.3 424.5 C1032.3 434 1024 440 1021.5 447.8 Z" fill="#ea4335" stroke="#ffffff" stroke-width="0.8"/><circle cx="1021.3" cy="424.3" r="3.6" fill="#7b1416"/></svg>
<div class="a" style="left:17.0px;top:465.4px;width:313px;height:29px;background:#4caf50;box-shadow:0 2px 3px rgba(0,0,0,0.28);border-radius:1px"></div>
<div class="a" style="left:17.0px;top:466.9px;width:313px;height:29px;line-height:29px;text-align:center;font-size:12px;color:#fff;-webkit-text-stroke:0.35px #fff;transform:scaleX(0.9)">ADD TO FAVORITES</div>
<svg class="a" style="left:65.5px;top:724.4px" width="14" height="16"><path d="M1 7.5 L13 1 V14 Z" fill="#fff"/></svg>
<div class="a" style="left:166.5px;top:725.4px;width:13px;height:13px;border-radius:50%;background:#fff"></div>
<div class="a" style="left:266.5px;top:725.4px;width:13px;height:13px;border-radius:1px;background:#fff"></div>
</div>
</body></html>
